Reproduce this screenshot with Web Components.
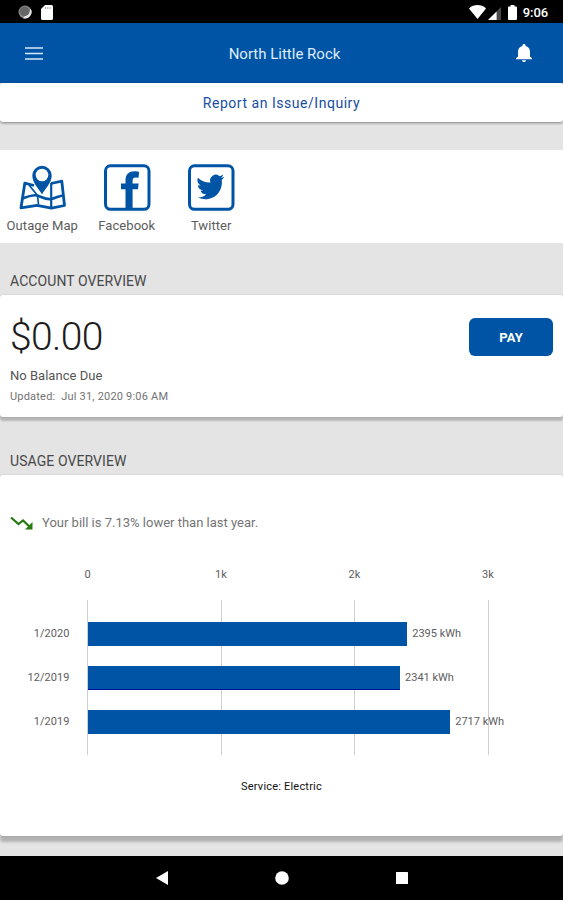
<!DOCTYPE html>
<html lang="en">
<head>
<meta charset="utf-8">
<title>North Little Rock</title>
<style>
  html, body { margin: 0; padding: 0; }
  body {
    --blue: #0054a6;
    width: 563px;
    height: 900px;
    overflow: hidden;
    background: #e4e4e4;
    font-family: Roboto, "Liberation Sans", sans-serif;
    color: #444;
  }
</style>
</head>
<body>
<utility-app></utility-app>

<script>
// ── Icons ───────────────────────────────────────────────────────────────────
const ICONS = {
  sync: `<svg width="14" height="14" viewBox="0 0 14 14"><circle cx="7" cy="7" r="6.500" fill="#8a8a8a"/><path d="M12.500 3.500A6.500 6.500 0 0 1 5 13.200L7 11 11 9z" fill="#e4e4e4"/><circle cx="6.500" cy="6.300" r="4.800" fill="#666"/></svg>`,
  sdcard: `<svg width="12" height="15" viewBox="0 0 12 15"><path d="M4 0H10.5A1.5 1.5 0 0 1 12 1.5V13.5A1.5 1.5 0 0 1 10.5 15H1.5A1.5 1.5 0 0 1 0 13.500V4z" fill="#fff"/><path d="M4.5 2V4M6.8 2V4M9 2V4" stroke="#aaa" stroke-width="1"/></svg>`,
  wifi: `<svg width="17" height="14" viewBox="0 0 17 14"><path d="M8.5 14L0 3.4C4.8-1 12.2-1 17 3.4z" fill="#fff"/></svg>`,
  signal: `<svg width="13" height="13" viewBox="0 0 13 13"><path d="M13 0V13H0z" fill="#4a4a4a"/><path d="M8.6 4.4V13H0z" fill="#fff"/></svg>`,
  battery: `<svg width="9" height="15" viewBox="0 0 9 15"><path d="M2.5 0h4v1.6H8a1 1 0 0 1 1 1V14a1 1 0 0 1-1 1H1a1 1 0 0 1-1-1V2.600a1 1 0 0 1 1-1h1.500z" fill="#fff"/></svg>`,
  menu: `<svg width="18" height="13" viewBox="0 0 18 13"><path d="M0 1H18M0 6.500H18M0 12H18" stroke="#d9e8f8" stroke-width="1.700"/></svg>`,
  bell: `<svg width="16" height="18" viewBox="4 2.500 16 19.500" preserveAspectRatio="none"><path d="M12 22c1.100 0 2-.9 2-2h-4c0 1.100.89 2 2 2zm6-6v-5c0-3.070-1.640-5.640-4.500-6.320V4c0-.83-.67-1.500-1.500-1.500s-1.500.67-1.500 1.500v.68C7.630 5.360 6 7.920 6 11v5l-2 2v1h16v-1l-2-2z" fill="#fff"/></svg>`,
  map: `<svg width="48" height="48" viewBox="0 0 48 48">
    <g fill="none" stroke="var(--blue)" stroke-linejoin="round">
      <path d="M16 21.500L6.800 19.200 3 43.800 19 41.300 33.500 44.200 46.500 41.500 43.800 17.200 33 19.500" stroke-width="2.800"/>
      <path d="M4.500 34.500C9 33 15 30.500 19 31.500S28 36 33 35 41 31.500 45.500 31.500" stroke-width="2.600"/>
      <path d="M33.200 19V44" stroke-width="2.200"/>
      <path d="M11 21L19.500 31.500 20.500 40.500" stroke-width="1.700"/>
    </g>
    <path d="M24 30.500C21.500 25.500 14.300 19 14.300 11.500A9.700 9.700 0 0 1 33.700 11.500C33.700 19 26.500 25.500 24 30.500z" fill="var(--blue)"/>
    <circle cx="24" cy="11" r="6.300" fill="#fff"/></svg>`,
  facebook: `<svg width="48" height="48" viewBox="0 0 48 48"><rect x="2.500" y="1.800" width="43.500" height="43.500" rx="5" fill="#fff" stroke="var(--blue)" stroke-width="3"/>
    <path d="M22.500 46V25.300H18V19.500H22.500V16.500C22.500 10 26 7.200 31.500 7.200 33.500 7.200 35 7.500 36.200 7.900L35.400 13.900C31.500 12.900 29.600 13.800 29.600 16.800V19.500H35.600L35 25.300H29.600V46z" fill="var(--blue)"/></svg>`,
  twitter: `<svg width="48" height="48" viewBox="0 0 48 48"><rect x="2.500" y="1.800" width="43.500" height="43.500" rx="5" fill="#fff" stroke="var(--blue)" stroke-width="3"/>
    <path transform="rotate(-6 24 23) translate(10 8.600) scale(1.180 1.200)" d="M23.950 4.570a10 10 0 0 1-2.820.77 4.960 4.960 0 0 0 2.160-2.720c-.95.550-2 .95-3.130 1.180a4.920 4.920 0 0 0-8.380 4.480C7.690 8.100 4.070 6.130 1.640 3.160a4.920 4.920 0 0 0 1.520 6.570 4.900 4.900 0 0 1-2.230-.61v.06a4.920 4.920 0 0 0 3.950 4.830 5 5 0 0 1-2.210.08 4.940 4.940 0 0 0 4.600 3.420A9.870 9.870 0 0 1 0 19.540a14 14 0 0 0 7.550 2.210c9.050 0 14-7.500 14-13.980 0-.21 0-.42-.02-.63a9.940 9.940 0 0 0 2.420-2.570z" fill="var(--blue)"/></svg>`,
  trend: `<svg width="24" height="15" viewBox="0 0 24 15"><path d="M1 1.500L8.500 8 13 4.500 20.500 11.500" fill="none" stroke="#277a12" stroke-width="2.200"/><path d="M22.500 6V13.500H15z" fill="#277a12"/></svg>`,
  back: `<svg width="12" height="14" viewBox="0 0 12 14"><path d="M12 0V14L0 7z" fill="#fff"/></svg>`,
  home: `<svg width="14" height="14" viewBox="0 0 14 14"><circle cx="7" cy="7" r="6.800" fill="#fff"/></svg>`,
  recent: `<svg width="12" height="12" viewBox="0 0 12 12"><rect width="12" height="12" rx=".5" fill="#fff"/></svg>`
};

const USAGE = [
  { month: '1/2020',  kwh: 2395 },
  { month: '12/2019', kwh: 2341 },
  { month: '1/2019',  kwh: 2717 }
];

// Shared helper: open shadow root with styles and markup
class BaseElement extends HTMLElement {
  connectedCallback() {
    if (this.shadowRoot) return;
    this.attachShadow({ mode: 'open' });
    this.shadowRoot.innerHTML = this.template();
  }
}

class AppIcon extends BaseElement {
  template() {
    return `
      <style>:host { display: inline-block; flex: none; } svg { display: block; }</style>
      ${ICONS[this.getAttribute('name')] || ''}`;
  }
}

class StatusBar extends BaseElement {
  template() {
    return `
      <style>
        :host { display: flex; align-items: center; box-sizing: border-box; height: 23px; padding: 1px 15px 0 18px; background: #000; color: #fff; }
        .right { display: flex; align-items: center; margin-left: auto; }
        .time { font-size: 13px; font-weight: 500; line-height: 20px; margin-left: 6px; padding-top: 1px; letter-spacing: -.1px; }
      </style>
      <app-icon name="sync"></app-icon>
      <app-icon name="sdcard" style="margin-left: 9px"></app-icon>
      <div class="right">
        <app-icon name="wifi"></app-icon>
        <app-icon name="signal" style="margin: 2px 7px 0 2px"></app-icon>
        <app-icon name="battery"></app-icon>
        <span class="time">9:06</span>
      </div>`;
  }
}

class AppHeader extends BaseElement {
  template() {
    return `
      <style>
        :host { display: grid; grid-template-columns: 40px 1fr 40px; align-items: center; box-sizing: border-box; height: 60px; padding: 0 25px; background: var(--blue); color: #dfecfa; }
        .title { text-align: center; font-size: 15px; padding: 1px 0 0 6px; }
        .end { justify-self: end; margin-right: 6px; }
      </style>
      <app-icon name="menu"></app-icon>
      <div class="title"><slot></slot></div>
      <app-icon class="end" name="bell"></app-icon>`;
  }
}

class LinkCard extends BaseElement {
  template() {
    return `
      <style>
        :host { display: flex; align-items: center; justify-content: center; height: 39px; background: #fff; border-radius: 3px; color: #174ea0; font-size: 14px; letter-spacing: .53px; box-shadow: 0 1px 3px rgba(0,0,0,.45); }
        span { padding-top: 1px; }
      </style>
      <span><slot></slot></span>`;
  }
}

class QuickLink extends BaseElement {
  template() {
    return `
      <style>
        :host { display: flex; flex-direction: column; align-items: center; width: 84.500px; padding-top: 14px; }
        .label { font-size: 13px; line-height: 16px; margin-top: 6px; color: #5c5c5c; letter-spacing: .08px; white-space: nowrap; }
      </style>
      <app-icon name="${this.getAttribute('icon')}"></app-icon>
      <div class="label"><slot></slot></div>`;
  }
}

class SectionTitle extends BaseElement {
  template() {
    return `
      <style>
        :host { display: flex; align-items: flex-end; box-sizing: border-box; height: 52px; padding: 0 10px 5px; font-size: 14px; line-height: 18px; letter-spacing: .08px; color: #484848; }
      </style>
      <slot></slot>`;
  }
}

class BalanceCard extends BaseElement {
  template() {
    return `
      <style>
        :host { display: flex; justify-content: space-between; box-sizing: border-box; height: 122px; padding: 22px 10px 0; background: #fff; border-radius: 3px; box-shadow: 0 4px 2px rgba(0,0,0,.2), 0 0 2px rgba(0,0,0,.15); }
        .amount { font-size: 39px; font-weight: 300; line-height: 40px; letter-spacing: -.6px; color: #1c1c1c; }
        .due { font-size: 13px; line-height: 16px; margin-top: 11px; letter-spacing: .02px; color: #555; }
        .updated { font-size: 11px; line-height: 14px; margin-top: 6px; letter-spacing: .2px; color: #727272; }
        button { width: 84px; height: 38px; margin: 1px 0 0; padding: 1px 0 0; border: 0; border-radius: 6px; background: var(--blue); color: #fff; font: 700 13px Roboto, sans-serif; letter-spacing: .1px; }
      </style>
      <div>
        <div class="amount">${this.getAttribute('amount')}</div>
        <div class="due">${this.getAttribute('status')}</div>
        <div class="updated">Updated:&nbsp; ${this.getAttribute('updated')}</div>
      </div>
      <button type="button">PAY</button>`;
  }
}

class UsageChart extends BaseElement {
  template() {
    const perKwh = 133.5 / 1000;
    return `
      <style>
        :host { display: block; font-size: 11px; color: #5e5e5e; }
        .ticks { display: grid; grid-template-columns: repeat(4, 133.500px); margin-left: 20.750px; text-align: center; line-height: 14px; }
        .plot {
          --line: linear-gradient(#cfcfcf, #cfcfcf);
          display: flex; flex-direction: column; gap: 20px; box-sizing: border-box; height: 155px; margin-top: 18px; padding-top: 21.500px;
          background: var(--line) 87px 0, var(--line) 221px 0, var(--line) 354px 0, var(--line) 488px 0;
          background-size: 1px 100%;
          background-repeat: no-repeat;
        }
        .row { display: flex; align-items: center; height: 24px; }
        .month { width: 69.500px; margin-right: 18px; text-align: right; letter-spacing: .05px; }
        .bar { height: 24px; background: var(--blue); }
        .row:nth-child(2) .bar { box-shadow: inset 0 -1px #00109a; }
        .value { margin-left: 5px; }
        .caption { margin-top: 25px; text-align: center; font-size: 11px; letter-spacing: .2px; line-height: 14px; color: #111; }
      </style>
      <div class="ticks"><span>0</span><span>1k</span><span>2k</span><span>3k</span></div>
      <div class="plot">
        ${USAGE.map(u => `<div class="row">
          <span class="month">${u.month}</span>
          <span class="bar" style="width: ${u.kwh * perKwh}px"></span>
          <span class="value">${u.kwh} kWh</span>
        </div>`).join('')}
      </div>
      <div class="caption"><slot></slot></div>`;
  }
}

class UsageCard extends BaseElement {
  template() {
    return `
      <style>
        :host { display: block; box-sizing: border-box; height: 361px; padding-top: 39px; background: #fff; border-radius: 3px; box-shadow: 0 6px 3px rgba(0,0,0,.22), 0 0 2px rgba(0,0,0,.15); }
        .trend { display: flex; align-items: center; gap: 8px; height: 16px; padding-left: 10px; font-size: 13px; color: #757575; }
        .trend app-icon { margin-top: 3px; }
        usage-chart { margin-top: 38px; }
      </style>
      <div class="trend"><app-icon name="trend"></app-icon><span><slot></slot></span></div>
      <usage-chart>Service: Electric</usage-chart>`;
  }
}

class AndroidNav extends BaseElement {
  template() {
    return `
      <style>
        :host { display: flex; align-items: center; justify-content: center; gap: 107px; height: 44px; background: #000; }
      </style>
      <app-icon name="back"></app-icon>
      <app-icon name="home"></app-icon>
      <app-icon name="recent"></app-icon>`;
  }
}

class UtilityApp extends BaseElement {
  template() {
    return `
      <style>
        :host { display: flex; flex-direction: column; height: 900px; }
        .links { display: flex; height: 93px; margin-top: 28px; background: #fff; }
        .tall { height: 58px; }
        android-nav { margin-top: auto; }
      </style>
      <status-bar></status-bar>
      <app-header>North Little Rock</app-header>
      <link-card>Report an Issue/Inquiry</link-card>
      <div class="links">
        <quick-link icon="map">Outage Map</quick-link>
        <quick-link icon="facebook">Facebook</quick-link>
        <quick-link icon="twitter">Twitter</quick-link>
      </div>
      <section-title>ACCOUNT OVERVIEW</section-title>
      <balance-card amount="$0.00" status="No Balance Due" updated="Jul 31, 2020 9:06 AM"></balance-card>
      <section-title class="tall">USAGE OVERVIEW</section-title>
      <usage-card>Your bill is 7.13% lower than last year.</usage-card>
      <android-nav></android-nav>`;
  }
}

customElements.define('app-icon', AppIcon);
customElements.define('status-bar', StatusBar);
customElements.define('app-header', AppHeader);
customElements.define('link-card', LinkCard);
customElements.define('quick-link', QuickLink);
customElements.define('section-title', SectionTitle);
customElements.define('balance-card', BalanceCard);
customElements.define('usage-chart', UsageChart);
customElements.define('usage-card', UsageCard);
customElements.define('android-nav', AndroidNav);
customElements.define('utility-app', UtilityApp);
</script>
</body>
</html>
